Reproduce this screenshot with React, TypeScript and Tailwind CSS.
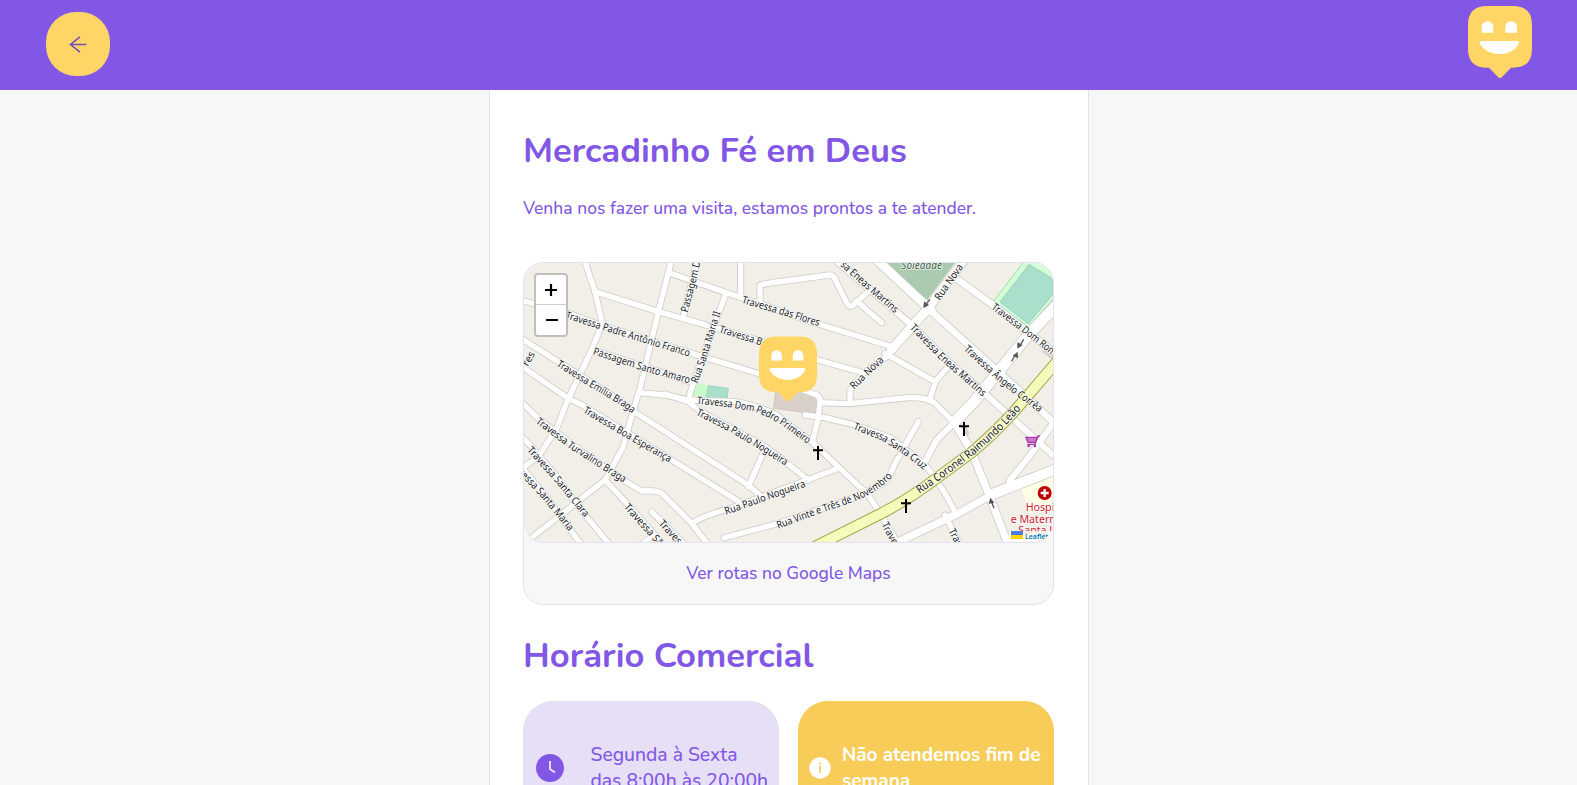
import React from "react";

const sans = "font-['Nunito','Open_Sans',sans-serif]";

type Road = { d: string; w?: number };

// Map units are thirds of a pixel.
const roads: Road[] = [
  { d: "M20 136L60 147L160 175L260 212L530 295L745 360" },
  { d: "M208 14L240 110L262 205L230 285L158 435L125 520L70 605L20 640" },
  { d: "M240 110L430 170L590 215L760 265L910 315L1040 352" },
  { d: "M470 14L430 170L375 400L360 450L345 500L325 575L290 640L270 675" },
  { d: "M467 55L630 112L700 135L910 207L1130 275" },
  { d: "M547 14L505 185" },
  { d: "M632 118L575 270L530 400L520 435" },
  { d: "M677 14L677 125" },
  { d: "M735 145L735 90Q770 82 810 78L945 60Q955 60 960 72L995 143Q1003 160 1015 150L1065 105" },
  { d: "M1025 138L1100 203" },
  { d: "M235 285L525 380" },
  { d: "M372 413L450 420L520 435L660 440Q770 460 810 500L890 560L975 640L1060 720L1105 790L1150 870" },
  { d: "M20 251L130 320L320 440L365 475L700 690L740 725" },
  { d: "M20 334L160 430L210 455L470 615L675 742" },
  { d: "M20 442L75 495L200 590L325 675L380 708Q425 705 440 715L530 805L580 870" },
  { d: "M20 545L50 575L120 660L210 780L285 870" },
  { d: "M20 636L90 722L200 870" },
  { d: "M45 852L270 675" },
  { d: "M270 675L340 750L445 870" },
  { d: "M410 770L510 870" },
  { d: "M378 870L410 845" },
  { d: "M530 805Q570 780 640 762L810 700L970 640" },
  { d: "M450 417L520 440L550 465L750 575L810 620L880 675" },
  { d: "M750 582L700 695" },
  { d: "M628 848L790 805L1000 735L1095 690Q1120 680 1140 625L1210 500" },
  { d: "M870 480L930 488L1020 510L1130 550L1230 630Q1280 690 1325 780" },
  { d: "M865 405L890 415Q918 420 915 443L910 485L893 560" },
  { d: "M915 443L1000 446L1180 428Q1230 425 1260 445L1320 505" },
  { d: "M1005 440L1005 405L1045 355L1115 305L1135 275" },
  { d: "M960 14L1190 210L1300 320L1420 425L1614 600", w: 18 },
  { d: "M1110 295L1260 380L1300 335" },
  { d: "M1262 378L1245 430" },
  { d: "M1330 75L1440 155L1625 298", w: 20 },
  { d: "M1250 170L1450 350L1625 510", w: 20 },
  { d: "M1085 14L1250 168", w: 26 },
  { d: "M1128 285L1235 165L1348 14", w: 26 },
  { d: "M1320 500L1265 555L1230 620", w: 18 },
  { d: "M1630 145L1540 240L1380 437L1320 500", w: 32 },
  { d: "M1320 505L1370 590L1422 720L1480 870", w: 22 },
  { d: "M1140 865L1330 775L1420 725L1630 640", w: 22 },
  { d: "M1425 720L1630 640", w: 30 },
  { d: "M1290 780L1335 870" },
  { d: "M1483 678L1550 595L1620 497", w: 18 },
];

type Label = { t: string; d: string; len: number; s?: number };

const labels: Label[] = [
  { t: "Travessa Padre Antônio Franco", d: "M153 180L260 214L540 300", len: 389 },
  { t: "Passagem Santo Amaro", d: "M236 288L400 342L560 385", len: 302 },
  { t: "Travessa Emília Braga", d: "M129 324L230 387L330 447L400 500", len: 270 },
  { t: "Travessa Boa Esperança", d: "M208 463L330 535L500 633", len: 300 },
  { t: "Travessa Turvalino Braga", d: "M67 495L170 573L280 643L360 693", len: 320 },
  { t: "Travessa Santa Clara", d: "M43 580L125 670L240 810", len: 266 },
  { t: "vessa Santa Maria", d: "M15 645L90 725L190 848", len: 236 },
  { t: "Travessa São José", d: "M333 750L440 870L500 940", len: 240 },
  { t: "Travessa Santos", d: "M437 800L540 910L600 975", len: 212 },
  { t: "Rua Paulo Nogueira", d: "M630 770L700 745L900 675", len: 254 },
  { t: "Travessa Paulo Nogueira", d: "M547 470L650 522L750 582L860 652", len: 310 },
  { t: "Travessa Dom Pedro Primeiro", d: "M546 436L640 446L720 460Q770 478 810 505L920 585", len: 368 },
  { t: "Rua Santa Maria II", d: "M538 382L568 300L616 140", len: 224 },
  { t: "Passagem Dom", d: "M508 171L532 82L560 -40", len: 200 },
  { t: "res", d: "M30 330L65 270", len: 44 },
  { t: "Travessa das Flores", d: "M682 134L810 172L950 215", len: 242 },
  { t: "Travessa Bom Jesus", d: "M614 222L760 268L880 305", len: 246 },
  { t: "sa Eneas Martins", d: "M982 24L1060 94L1180 196", len: 218 },
  { t: "Travessa Eneas Martins", d: "M1191 212L1280 305L1440 445", len: 300 },
  { t: "Travessa Ângelo Corrêa", d: "M1352 277L1450 366L1500 406L1600 480", len: 294 },
  { t: "Travessa Dom Romualdo", d: "M1434 152L1530 225L1740 388", len: 306 },
  { t: "Rua Nova", d: "M1266 132L1346 18", len: 124 },
  { t: "Rua Nova", d: "M1010 397L1120 291", len: 126 },
  { t: "Travessa Santa Cruz", d: "M1018 513L1100 545Q1180 590 1260 660", len: 250 },
  { t: "Rua Vinte e Três de Novembro", d: "M786 812L900 770L1020 728Q1110 690 1150 625", len: 376 },
  { t: "Rua Coronel Raimundo Leão", d: "M1208 708L1290 652L1370 592L1450 521L1560 402", len: 396, s: 34 },
  { t: "Travessa", d: "M1108 803L1162 907", len: 114 },
  { t: "Travessa", d: "M1309 823L1362 928", len: 114 },
];

function Smile({ className }: { className: string }) {
  return (
    <svg viewBox="0 0 64 72" className={className} aria-hidden="true">
      <path d="M19 0H45Q64 0 64 19V43Q64 61.7 45 61.7H43L33.5 71.4Q32 72.8 30.5 71.4L21 61.7H19Q0 61.7 0 43V19Q0 0 19 0Z" fill="#ffd666" />
      <path d="M13.7 26.7V21A5.8 5.8 0 0 1 25.3 21V26.7ZM37.3 26.7V21A5.8 5.8 0 0 1 49 21V26.7Z" fill="#fff" />
      <path d="M13.3 35H49.4Q51.8 35.6 50.8 38C47 44.5 39.5 48.1 31.5 48.1S15.800 44.500 12 38Q11 35.600 13.300 35Z" fill="#fff" />
    </svg>
  );
}

function Cross({ x, y }: { x: number; y: number }) {
  return <path d={`M${x} ${y - 21}V${y + 21}M${x - 15} ${y - 8}H${x + 15}`} stroke="#000" strokeWidth="6" />;
}

function CityMap() {
  return (
    <svg viewBox="27 24 1587 837" className="block h-[279px] w-[529px]" preserveAspectRatio="none">
      <rect x="27" y="24" width="1587" height="837" fill="#f2efe9" />
      <path d="M1115 20H1320L1235 135Z" fill="#aacbaf" stroke="#94b99a" strokeWidth="2" />
      <path d="M1530 15L1436 138L1540 216L1630 115V50L1575 15Z" fill="#d5fdd8" stroke="#9be3a2" strokeWidth="3" />
      <path d="M1542 28L1455 141L1540 206L1614 118V72Z" fill="#aae0cb" stroke="#83c7ab" strokeWidth="2" />
      <path d="M545 382L582 393L573 431L532 423Z" fill="#c8facc" />
      <path d="M580 392L640 400L636 435L573 431Z" fill="#aae0cb" stroke="#8ac9b2" strokeWidth="2" />
      <path d="M783 405L865 403L908 423L910 478L775 460Z" fill="#d9d0c9" stroke="#c5b5a9" strokeWidth="2" />
      <path d="M1580 290L1597 282L1618 300V318Z" fill="#d9d0c9" />
      <path d="M1518 695L1620 655V740L1545 778Z" fill="#ffffe5" />
      <path d="M1345 520L1355 515L1364 538L1350 543Z" fill="#d9d0c9" />
      <g fill="none" stroke="#cfcdca" strokeLinecap="round" strokeLinejoin="round">
        {roads.map((r, i) => (
          <path key={i} d={r.d} strokeWidth={(r.w ?? 16) + 5} />
        ))}
      </g>
      <g fill="none" stroke="#fff" strokeLinecap="round" strokeLinejoin="round">
        {roads.map((r, i) => (
          <path key={i} d={r.d} strokeWidth={r.w ?? 16} />
        ))}
      </g>
      <g fill="none">
        <path d="M1630 315L1510 455Q1450 525 1370 592L1240 688Q1180 732 1100 775L900 875" stroke="#a2a64b" strokeWidth="35" />
        <path d="M1630 315L1510 455Q1450 525 1370 592L1240 688Q1180 732 1100 775L900 875" stroke="#f6fabb" strokeWidth="29" />
      </g>
      <g fontFamily="'Noto Sans', sans-serif" fill="#18181e" stroke="#fff" strokeWidth="5" strokeOpacity="0.75" strokeLinejoin="round" paintOrder="stroke">
        {labels.map((l, i) => (
          <React.Fragment key={i}>
            <path id={`street-${i}`} d={l.d} fill="none" stroke="none" />
            <text fontSize={l.s ?? 31} dy="10" textLength={l.len} lengthAdjust="spacingAndGlyphs">
              <textPath href={`#street-${i}`} textLength={l.len} lengthAdjust="spacingAndGlyphs">{l.t}</textPath>
            </text>
          </React.Fragment>
        ))}
        <text x="1220" y="43" fontSize="30" fontStyle="italic" textAnchor="middle" textLength="122" fill="#45604a">Soledade</text>
      </g>
      <g stroke="#555" strokeWidth="4" fill="#555">
        <path d="M1245 133L1233 148" />
        <path d="M1225 160L1227 139L1242 150Z" stroke="none" />
        <path d="M1526 253L1517 268" />
        <path d="M1507 281L1507 262L1523 270Z" stroke="none" />
        <path d="M1490 319L1499 303" />
        <path d="M1508 290L1493 302L1509 310Z" stroke="none" />
        <path d="M1437 760L1430 742" />
        <path d="M1426 728L1421 746L1438 743Z" stroke="none" />
      </g>
      <Cross x={909} y={594} />
      <Cross x={1347} y={522} />
      <Cross x={1173} y={753} />
      <g stroke="#ac39ac" strokeWidth="4">
        <path d="M1575 543H1569L1560 568H1537" fill="none" />
        <path d="M1533 547H1567L1561 562H1539Z" fill="#c77ac7" />
        <circle cx="1541" cy="573" r="2" />
        <circle cx="1560" cy="573" r="2" />
      </g>
      <circle cx="1589" cy="714" r="21" fill="#bf0000" />
      <path d="M1589 702V726M1577 714H1601" stroke="#fff" strokeWidth="7" />
      <g fontFamily="'Noto Sans', sans-serif" fontSize="32" fill="#c8202c" stroke="#fff" strokeWidth="4" paintOrder="stroke">
        <text x="1532" y="767">Hospital</text>
        <text x="1487" y="803">e Maternidade</text>
        <text x="1510" y="838">Santa Lúcia</text>
      </g>
      <rect x="1482" y="828" width="132" height="33" fill="#fff" fillOpacity="0.8" />
      <rect x="1488" y="828" width="36" height="12" fill="#4c7be1" />
      <rect x="1488" y="840" width="36" height="12" fill="#ffd500" />
      <text x="1530" y="852" fontFamily="'Noto Sans', sans-serif" fontWeight="600" fontSize="21" fill="#0078a8" textLength="70">Leaflet</text>
    </svg>
  );
}

export default function App() {
  return (
    <div className={`flex h-[785px] flex-col overflow-hidden bg-[#f7f7f7] text-[#8257e5] ${sans}`}>
      <header className="flex h-[90px] shrink-0 items-start justify-between bg-[#8257e5] pr-[45px] pl-[46.400px]">
        <button aria-label="Voltar" className="mt-[12.400px] flex size-16 items-center justify-center rounded-[30px] bg-[#ffd666]">
          <svg viewBox="0 0 18 18" className="size-[18px]" fill="none" stroke="#7450b8" strokeWidth="1.6">
            <path d="M17.500 9.500H1.500M11 1.800L1.500 9.500L11 17.200" />
          </svg>
        </button>
        <Smile className="mt-1.5 h-[72px] w-16" />
      </header>

      <main className="mx-auto w-[600px] flex-1 border-x border-[#e5e3f1] bg-white px-[33.500px]">
        <h1 className="mt-9 h-12 text-[34.6px] leading-[50px] font-bold whitespace-nowrap">Mercadinho Fé em Deus</h1>
        <p className="mt-[22px] h-6 text-[17.45px] leading-6 font-medium whitespace-nowrap">
          Venha nos fazer uma visita, estamos prontos a te atender.
        </p>

        <section className="mt-[42px] h-[343px] w-[531px] overflow-hidden rounded-[20px] border border-[#e3e1f2] bg-[#f7f7f7]">
          <div className="relative h-[280px] overflow-hidden rounded-[20px] border-b border-[#e3e1f2]">
            <CityMap />
            <Smile className="absolute top-[73px] left-[235px] h-[66px] w-[58px]" />
            <div className="absolute top-[10px] left-[10px] flex h-[64px] w-[34px] flex-col overflow-hidden rounded border-2 border-[#c2bfba] bg-white">
              <button aria-label="Aproximar" className="flex h-[30px] items-center justify-center border-b border-[#ccc]">
                <svg viewBox="0 0 12 12" className="size-3"><path d="M6 0V12M0 6H12" stroke="#000" strokeWidth="2.200" /></svg>
              </button>
              <button aria-label="Afastar" className="flex h-[30px] items-center justify-center pl-px">
                <svg viewBox="0 0 12 12" className="size-3"><path d="M0 6H12" stroke="#000" strokeWidth="2.200" /></svg>
              </button>
            </div>
          </div>
          <a className="flex h-[61px] items-center justify-center text-[17.45px] font-medium">Ver rotas no Google Maps</a>
        </section>

        <h2 className="mt-[26px] h-12 text-[34.6px] leading-[50px] font-bold whitespace-nowrap">Horário Comercial</h2>

        <div className="mt-[22px] flex w-[531px] gap-[19px]">
          <div className="flex h-[134px] w-64 items-center rounded-[30px] border border-[#e3e1f2] bg-[#e6dff6] pl-3">
            <svg viewBox="0 0 28 28" className="size-7 shrink-0" fill="none">
              <circle cx="14" cy="14" r="14" fill="#8257e5" />
              <path d="M14 7V15L19 18.500" stroke="#e6dff6" strokeWidth="2" />
            </svg>
            <p className="ml-[26.500px] text-[19.3px] leading-[26px] font-medium whitespace-nowrap">
              Segunda à Sexta<br />das 8:00h às 20:00h
            </p>
          </div>
          <div className="flex h-[134px] w-64 items-center rounded-[30px] bg-[#f8cc58] pl-[11px] text-white">
            <svg viewBox="0 0 22 22" className="size-[22px] shrink-0">
              <circle cx="11" cy="11" r="10.700" fill="#fff" />
              <path d="M11 9V16M11 5.500V7.500" stroke="#f8cc58" strokeWidth="1.800" />
            </svg>
            <p className="ml-[11px] text-[19px] leading-[26px] font-bold whitespace-nowrap">
              Não atendemos fim de<br />semana
            </p>
          </div>
        </div>
      </main>
    </div>
  );
}
